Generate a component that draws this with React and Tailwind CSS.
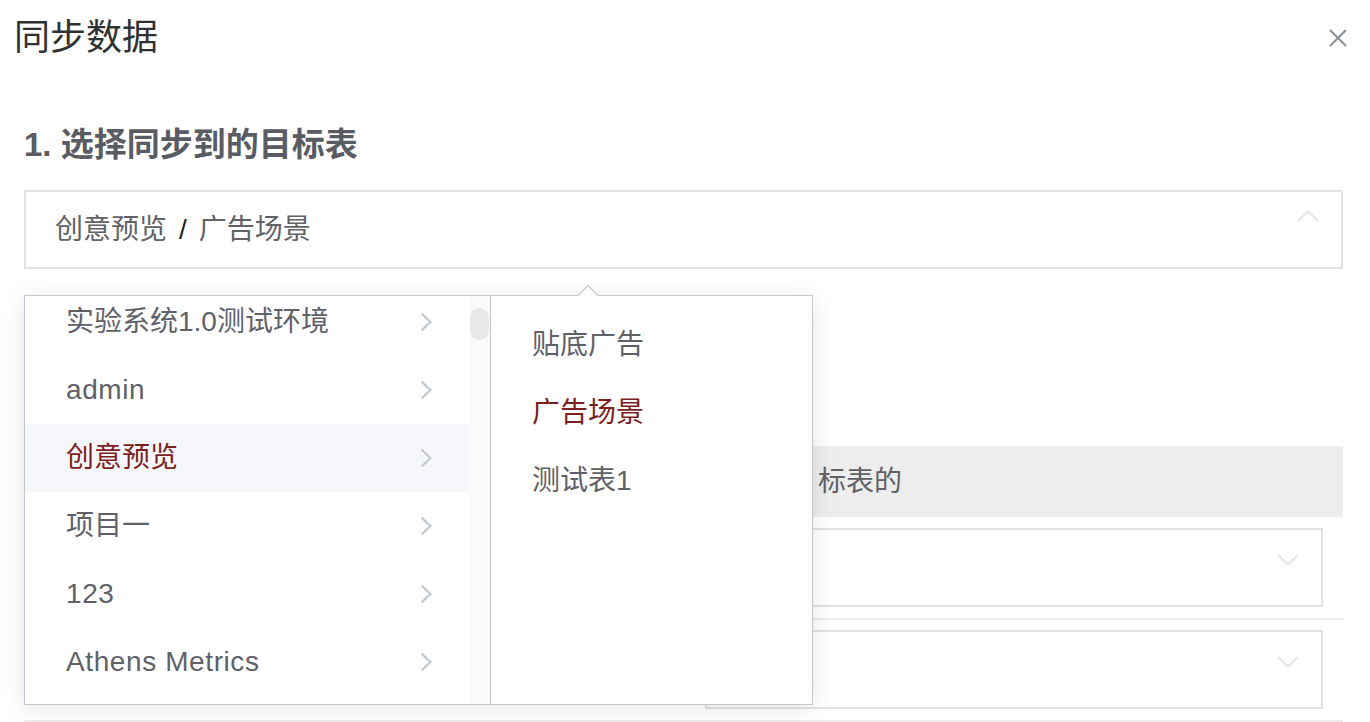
import React from 'react';

const leftItems = [
  { t: '实验系统1.0测试环境', latin: false },
  { t: 'admin', latin: true },
  { t: '创意预览', latin: false },
  { t: '项目一', latin: false },
  { t: '123', latin: true },
  { t: 'Athens Metrics', latin: true },
];
const rightItems = ['贴底广告', '广告场景', '测试表1'];

const ChevronRight = () => (
  <svg width="12" height="20" viewBox="0 0 12 20" fill="none">
    <polyline points="1.5,1.5 10.5,10 1.5,18.5" stroke="#c0c4cc" strokeWidth="2" />
  </svg>
);

const ChevronUp = () => (
  <svg width="22" height="12" viewBox="0 0 22 12" fill="none">
    <polyline points="1,11 11,1.5 21,11" stroke="#e6e6e6" strokeWidth="2" />
  </svg>
);

const ChevronDown = () => (
  <svg width="22" height="12" viewBox="0 0 22 12" fill="none">
    <polyline points="1,1 11,10.5 21,1" stroke="#e6e6e6" strokeWidth="2" />
  </svg>
);

const SelectBox = () => (
  <div className="mr-[20px] h-[79px] border-2 border-[#e2e2e2] flex justify-end items-start pr-[22px] pt-[24px]">
    <ChevronDown />
  </div>
);

const Cascader = () => (
  <div className="absolute left-[24px] top-[295px] w-[789px] h-[410px] border border-[#c3c6cc] bg-white flex shadow-[0_4px_24px_rgba(0,0,0,0.1)]">
    {/* popper arrow */}
    <svg className="absolute left-[552px] top-[-12px]" width="22" height="12" viewBox="0 0 22 12">
      <polygon points="0,12 11,1 22,12" fill="#ffffff" />
      <polyline points="0.5,12 11,1.5 21.5,12" fill="none" stroke="#c3c6cc" strokeWidth="1.2" />
    </svg>

    <div className="w-[466px] h-full flex border-r border-[#c3c6cc] overflow-hidden">
      <div className="w-[445px] h-full overflow-hidden">
        <ul className="-mt-[8px]">
          {leftItems.map(({ t, latin }) => {
            const active = t === '创意预览';
            return (
              <li
                key={t}
                className={`h-[68px] flex items-center justify-between pl-[41px] pr-[38px] text-[28px] leading-[68px] ${
                  active ? 'bg-[#f5f7fa] text-[#7d1f1f]' : 'text-[#5f6168]'
                }`}
              >
                <span className={latin ? 'tracking-[0.6px]' : ''}>{t}</span>
                <ChevronRight />
              </li>
            );
          })}
        </ul>
      </div>
      <div className="w-[20px] h-full bg-[#fafafa] pt-[12px]">
        <div className="h-[32px] w-[19px] rounded-full bg-[#e8e8e8]" />
      </div>
    </div>

    <ul className="flex-1 pt-[15px]">
      {rightItems.map((t) => (
        <li
          key={t}
          className={`h-[68px] flex items-center pl-[41px] text-[28px] leading-[68px] ${
            t === '广告场景' ? 'text-[#7d1f1f]' : 'text-[#5f6168]'
          }`}
        >
          {t}
        </li>
      ))}
    </ul>
  </div>
);

const App = () => {
  return (
    <div className="relative w-[1370px] h-[722px] overflow-hidden bg-white font-['Liberation_Sans','Noto_Sans_CJK_SC',sans-serif]">
      <div className="flex items-center justify-between pl-[14px] pr-[23px] pt-[20px]">
        <h1 className="text-[36px] leading-[36px] text-[#303133]">同步数据</h1>
        <svg width="18" height="18" viewBox="0 0 18 18">
          <path d="M1 1 L17 17 M17 1 L1 17" stroke="#8c909a" strokeWidth="2" />
        </svg>
      </div>

      <div className="pl-[24px] pr-[27px]">
        <h2 className="mt-[73px] text-[33px] leading-[32px] font-bold text-[#595c63]">1. 选择同步到的目标表</h2>

        <div className="mt-[29px] h-[79px] border-2 border-[#e2e2e2] flex items-start justify-between pl-[29px] pr-[22px]">
          <span className="self-center text-[28px] leading-[36px] text-[#606266]">
            创意预览<span className="mx-[12px] text-[#1f1f1f]">/</span>广告场景
          </span>
          <div className="mt-[18px]">
            <ChevronUp />
          </div>
        </div>

        <div className="mt-[177px]">
          <div className="h-[71px] bg-[#ededed] grid grid-cols-[681px_1fr] items-center text-[28px] text-[#606266]">
            <div />
            <span className="pl-[113px]">标表的</span>
          </div>
          <div className="grid grid-cols-[681px_1fr] pt-[11px] pb-[11px] border-b-2 border-[#ededed]">
            <div />
            <SelectBox />
          </div>
          <div className="grid grid-cols-[681px_1fr] pt-[10px] pb-[11px] border-b-2 border-[#ededed]">
            <div />
            <SelectBox />
          </div>
        </div>
      </div>

      <Cascader />
    </div>
  );
};

export default App;
